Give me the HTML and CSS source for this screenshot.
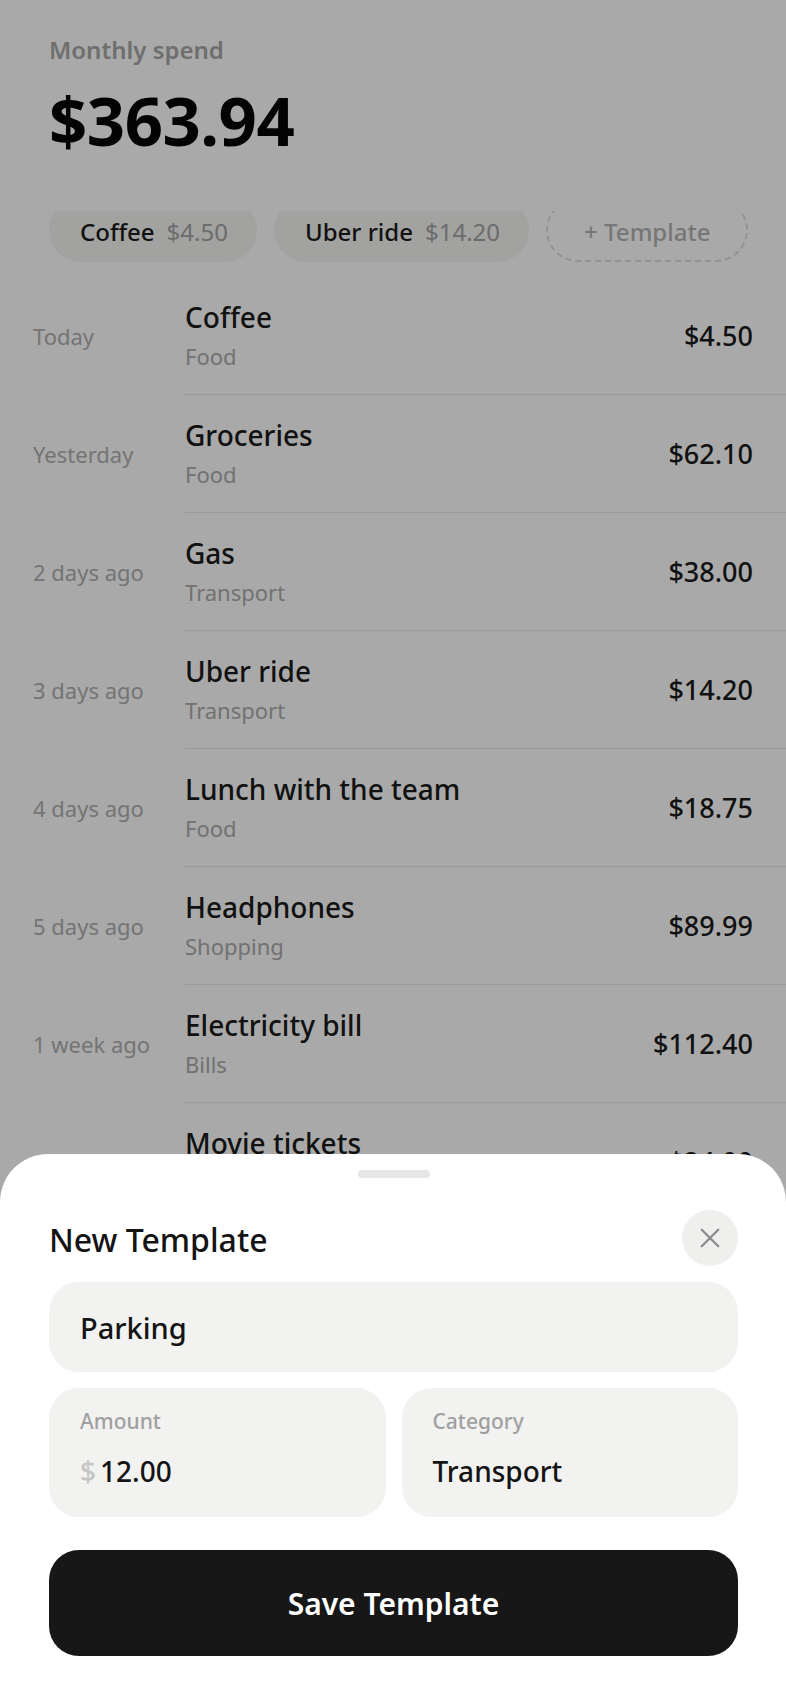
FILE: index.html
```html
<!DOCTYPE html>
<html>
<head>
	<title>Spend</title>
	<meta name="viewport" content="width=device-width, initial-scale=1.0">
	<link rel="stylesheet" href="styles.css">
</head>
<body>
  <div class="header">
  	<div class="label">Monthly spend</div>
  	<div class="total">$363.94</div>
  </div>

  <div class="chips">
  	<div class="chip"><b>Coffee</b><span>$4.50</span></div>
  	<div class="chip"><b>Uber ride</b><span>$14.20</span></div>
  	<div class="chip add">+ Template</div>
  </div>

  <div class="list">
  	<div class="row">
  	  <div class="when">Today</div>
  	  <div class="main">
  	  	<div class="info"><div class="name">Coffee</div><div class="cat">Food</div></div>
  	  	<div class="price">$4.50</div>
  	  </div>
  	</div>
  	<div class="row">
  	  <div class="when">Yesterday</div>
  	  <div class="main">
  	  	<div class="info"><div class="name">Groceries</div><div class="cat">Food</div></div>
  	  	<div class="price">$62.10</div>
  	  </div>
  	</div>
  	<div class="row">
  	  <div class="when">2 days ago</div>
  	  <div class="main">
  	  	<div class="info"><div class="name">Gas</div><div class="cat">Transport</div></div>
  	  	<div class="price">$38.00</div>
  	  </div>
  	</div>
  	<div class="row">
  	  <div class="when">3 days ago</div>
  	  <div class="main">
  	  	<div class="info"><div class="name">Uber ride</div><div class="cat">Transport</div></div>
  	  	<div class="price">$14.20</div>
  	  </div>
  	</div>
  	<div class="row">
  	  <div class="when">4 days ago</div>
  	  <div class="main">
  	  	<div class="info"><div class="name">Lunch with the team</div><div class="cat">Food</div></div>
  	  	<div class="price">$18.75</div>
  	  </div>
  	</div>
  	<div class="row">
  	  <div class="when">5 days ago</div>
  	  <div class="main">
  	  	<div class="info"><div class="name">Headphones</div><div class="cat">Shopping</div></div>
  	  	<div class="price">$89.99</div>
  	  </div>
  	</div>
  	<div class="row">
  	  <div class="when">1 week ago</div>
  	  <div class="main">
  	  	<div class="info"><div class="name">Electricity bill</div><div class="cat">Bills</div></div>
  	  	<div class="price">$112.40</div>
  	  </div>
  	</div>
  	<div class="row">
  	  <div class="when">1 week ago</div>
  	  <div class="main">
  	  	<div class="info"><div class="name">Movie tickets</div><div class="cat">Entertainment</div></div>
  	  	<div class="price">$24.00</div>
  	  </div>
  	</div>
  </div>

  <div class="shade"></div>

  <div class="sheet">
  	<div class="grip"></div>
  	<div class="sheet-head">
  	  <div class="sheet-title">New Template</div>
  	  <button class="close">
  	  	<svg width="24" height="24" viewBox="0 0 24 24" fill="none" stroke="#8c8c8c" stroke-width="2.6" stroke-linecap="round">
  	  	  <path d="M3 3 L21 21 M21 3 L3 21"/>
  	  	</svg>
  	  </button>
  	</div>
  	<div class="field name-field">Parking</div>
  	<div class="pair">
  	  <div class="field box">
  	  	<div class="box-label">Amount</div>
  	  	<div class="box-value"><span class="cur">$</span>12.00</div>
  	  </div>
  	  <div class="field box">
  	  	<div class="box-label">Category</div>
  	  	<div class="box-value">Transport</div>
  	  </div>
  	</div>
  	<button class="save">Save Template</button>
  </div>
</body>
</html>
```

FILE: styles.css
```css
*{
	box-sizing: border-box;
	font-family: "Noto Sans", "Open Sans", sans-serif;
}
body{
	margin: 0;
	background: #fff;
	color: #161616;
	width: 786px;
	height: 1704px;
	overflow: hidden;
}

.header{
	padding: 33px 49px 0;
}
.header .label{
	font-size: 24px;
	font-weight: 600;
	color: #a8a8a8;
	line-height: 34px;
}
.header .total{
	font-size: 67px;
	font-weight: 700;
	color: #050505;
	letter-spacing: -0.5px;
	line-height: 90px;
	margin-top: 8px;
}

.chips{
	display: flex;
	gap: 17px;
	padding: 0 49px;
	margin-top: 46px;
	height: 51px;
	overflow: hidden;
	align-items: flex-end;
}
.chip{
	flex: none;
	height: 64px;
	border-radius: 32px;
	background: #f4f4f2;
	padding: 3px 29px 0 31px;
	display: flex;
	align-items: center;
	gap: 12px;
	font-size: 24px;
	white-space: nowrap;
}
.chip b{
	font-weight: 500;
	color: #1b1b1b;
}
.chip span{
	color: #a4a4a4;
}
.chip.add{
	background: transparent;
	border: 2px dashed #dcdcdc;
	color: #b3b3b3;
	font-weight: 500;
	padding: 3px 36px 0;
}

.list{
	margin-top: 15px;
}
.row{
	display: flex;
	align-items: stretch;
}
.when{
	width: 185px;
	flex: none;
	padding-left: 33px;
	display: flex;
	align-items: center;
	font-size: 22px;
	color: #b0b0b0;
}
.main{
	flex: 1;
	display: flex;
	align-items: center;
	justify-content: space-between;
	padding: 22px 33px 22px 0;
	border-bottom: 1px solid #e8e8e6;
	height: 118px;
}
.name{
	font-size: 28px;
	font-weight: 500;
	line-height: 36px;
	color: #1a1a1a;
}
.cat{
	font-size: 22px;
	line-height: 31px;
	margin-top: 6px;
	color: #acacac;
}
.price{
	font-size: 27px;
	font-weight: 500;
	color: #1a1a1a;
}

.shade{
	position: fixed;
	inset: 0;
	background: rgba(0, 0, 0, 0.337);
}

.sheet{
	position: fixed;
	left: 0;
	right: 0;
	bottom: 0;
	height: 550px;
	background: #fff;
	border-radius: 48px 48px 0 0;
	padding: 16px 48px 48px 49px;
	display: flex;
	flex-direction: column;
}
.grip{
	width: 72px;
	height: 8px;
	border-radius: 4px;
	background: #e6e6e6;
	align-self: center;
}
.sheet-head{
	display: flex;
	align-items: center;
	justify-content: space-between;
	margin-top: 32px;
	height: 56px;
}
.sheet-title{
	font-size: 32px;
	font-weight: 500;
	color: #141414;
	padding-top: 3px;
}
.close{
	width: 56px;
	height: 56px;
	border-radius: 50%;
	border: 0;
	background: #efefee;
	display: flex;
	align-items: center;
	justify-content: center;
	padding: 0;
}
.close svg{
	width: 22px;
	height: 22px;
}

.field{
	background: #f2f2f0;
	border-radius: 30px;
}
.name-field{
	margin-top: 16px;
	height: 90px;
	padding: 0 31px;
	display: flex;
	align-items: center;
	font-size: 29px;
	font-weight: 500;
	color: #141414;
}
.pair{
	display: grid;
	grid-template-columns: 1fr 1fr;
	gap: 16px;
	margin-top: 16px;
}
.box{
	height: 129px;
	padding: 20px 31px 0;
}
.box-label{
	font-size: 21px;
	font-weight: 500;
	color: #a0a0a0;
	line-height: 26px;
}
.box-value{
	margin-top: 18px;
	font-size: 28px;
	font-weight: 500;
	color: #141414;
	line-height: 38px;
}
.cur{
	color: #c6c6c6;
	margin-right: 4px;
}

.save{
	margin-top: 33px;
	height: 106px;
	border: 0;
	border-radius: 30px;
	background: #171717;
	color: #fff;
	font-size: 30px;
	font-weight: 600;
}
```
